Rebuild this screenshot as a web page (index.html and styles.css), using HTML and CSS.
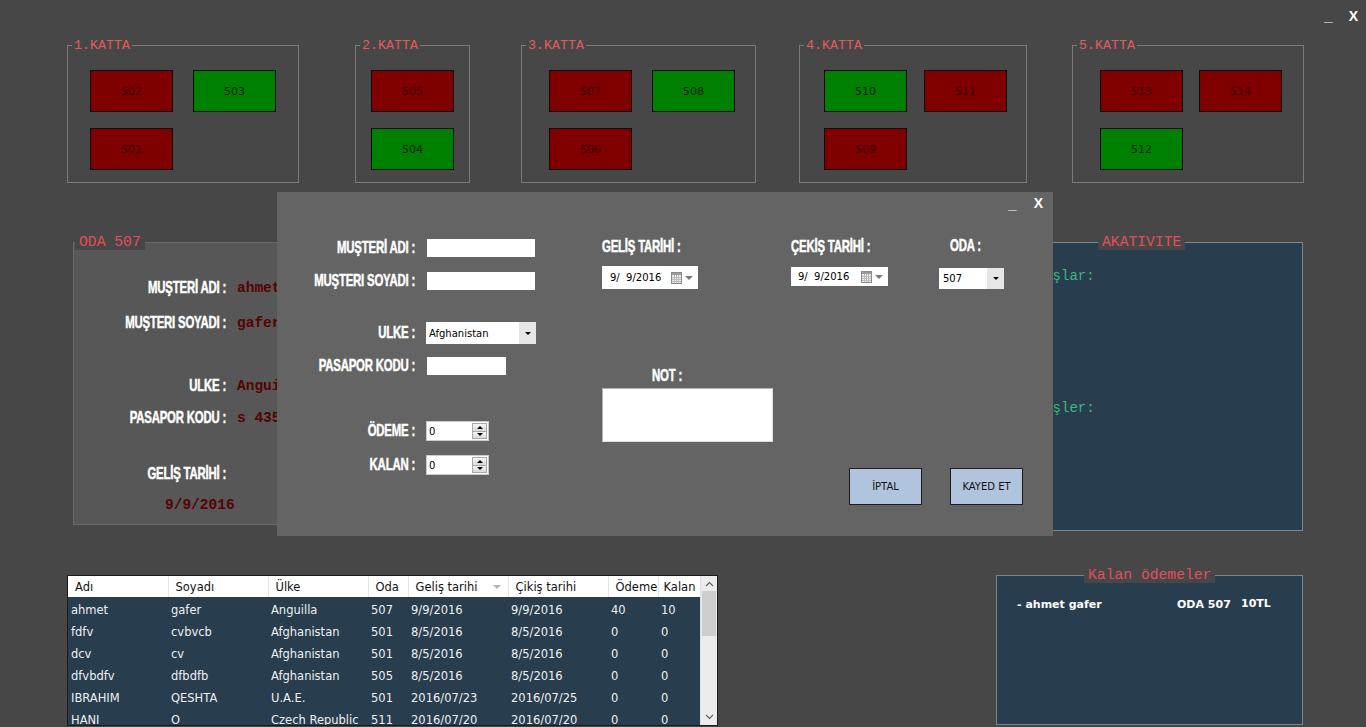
FILE: index.html
```html
<!DOCTYPE html>
<html lang="tr">
<head>
<meta charset="utf-8">
<title>Otel Yönetimi</title>
<link rel="stylesheet" href="styles.css">
</head>
<body>
<div class="app">
  <div class="titlebar"><span class="tb-min">_</span><span class="tb-close">X</span></div>

  <div class="floors">
    <div class="group g1">
      <span class="legend">1.KATTA</span>
      <div class="rooms">
        <div class="room red">502</div><div class="room green">503</div>
        <div class="room red">501</div>
      </div>
    </div>
    <div class="group g2">
      <span class="legend">2.KATTA</span>
      <div class="rooms single">
        <div class="room red">505</div>
        <div class="room green">504</div>
      </div>
    </div>
    <div class="group g3">
      <span class="legend">3.KATTA</span>
      <div class="rooms">
        <div class="room red">507</div><div class="room green">508</div>
        <div class="room red">506</div>
      </div>
    </div>
    <div class="group g4">
      <span class="legend">4.KATTA</span>
      <div class="rooms">
        <div class="room green">510</div><div class="room red">511</div>
        <div class="room red">509</div>
      </div>
    </div>
    <div class="group g5">
      <span class="legend">5.KATTA</span>
      <div class="rooms">
        <div class="room red">513</div><div class="room red">514</div>
        <div class="room green">512</div>
      </div>
    </div>
  </div>

  <div class="middle">
    <section class="oda">
      <span class="legend lg">ODA 507</span>
      <div class="irow r1"><span class="lbl">MUŞTERİ ADI :</span><span class="val">ahmet</span></div>
      <div class="irow r2"><span class="lbl">MUŞTERI SOYADI :</span><span class="val">gafer</span></div>
      <div class="irow r3"><span class="lbl">ULKE :</span><span class="val">Anguilla</span></div>
      <div class="irow r4"><span class="lbl">PASAPOR KODU :</span><span class="val">s 4353</span></div>
      <div class="irow r5"><span class="lbl">GELİŞ TARİHİ :</span></div>
      <div class="dval val">9/9/2016</div>
    </section>
    <section class="act">
      <span class="legend lg act-legend">AKATIVITE</span>
      <div class="gline l1">Girişlar:</div>
      <div class="gline l2">Çıkışler:</div>
    </section>
  </div>

  <div class="bottom">
    <div class="grid">
      <table class="gtable">
        <colgroup>
          <col class="c100"><col class="c100"><col class="c100"><col class="c40">
          <col class="c100"><col class="c100"><col class="c50"><col class="c42">
        </colgroup>
        <thead>
          <tr>
            <th>Adı</th><th>Soyadı</th><th>Ülke</th><th>Oda</th>
            <th><div class="thc">Geliş tarihi<span class="sort"></span></div></th>
            <th>Çikiş tarihi</th><th class="th-od">Ödeme</th><th class="th-ka">Kalan</th>
          </tr>
        </thead>
        <tbody>
          <tr><td>ahmet</td><td>gafer</td><td>Anguilla</td><td>507</td><td>9/9/2016</td><td>9/9/2016</td><td>40</td><td>10</td></tr>
          <tr><td>fdfv</td><td>cvbvcb</td><td>Afghanistan</td><td>501</td><td>8/5/2016</td><td>8/5/2016</td><td>0</td><td>0</td></tr>
          <tr><td>dcv</td><td>cv</td><td>Afghanistan</td><td>501</td><td>8/5/2016</td><td>8/5/2016</td><td>0</td><td>0</td></tr>
          <tr><td>dfvbdfv</td><td>dfbdfb</td><td>Afghanistan</td><td>505</td><td>8/5/2016</td><td>8/5/2016</td><td>0</td><td>0</td></tr>
          <tr><td>IBRAHIM</td><td>QESHTA</td><td>U.A.E.</td><td>501</td><td>2016/07/23</td><td>2016/07/25</td><td>0</td><td>0</td></tr>
          <tr><td>HANI</td><td>O</td><td>Czech Republic</td><td>511</td><td>2016/07/20</td><td>2016/07/20</td><td>0</td><td>0</td></tr>
        </tbody>
      </table>
      <div class="vscroll">
        <div class="sbtn up"><svg width="9" height="6" viewBox="0 0 9 6"><path d="M1 5 L4.5 1.5 L8 5" fill="none" stroke="#606060" stroke-width="1.2"/></svg></div>
        <div class="thumb"></div>
        <div class="track"></div>
        <div class="sbtn down"><svg width="9" height="6" viewBox="0 0 9 6"><path d="M1 1 L4.5 4.5 L8 1" fill="none" stroke="#606060" stroke-width="1.2"/></svg></div>
      </div>
    </div>
    <section class="kalan">
      <span class="legend lg kalan-legend">Kalan ödemeler</span>
      <div class="krow"><span class="kname">- ahmet gafer</span><span class="koda">ODA 507</span><span class="ktl">10TL</span></div>
    </section>
  </div>

  <div class="dialog">
    <div class="d-head"><span class="tb-min">_</span><span class="tb-close">X</span></div>
    <div class="d-body">
      <div class="colA">
        <div class="frow f1"><span class="lbl">MUŞTERİ ADI :</span><div class="tb"></div></div>
        <div class="frow f2"><span class="lbl">MUŞTERI SOYADI :</span><div class="tb"></div></div>
        <div class="frow f3"><span class="lbl">ULKE :</span><div class="sel wide"><span>Afghanistan</span><span class="arr"><i class="tri"></i></span></div></div>
        <div class="frow f4"><span class="lbl">PASAPOR KODU :</span><div class="tb short"></div></div>
        <div class="frow f5"><span class="lbl">ÖDEME :</span><div class="spin"><span>0</span><span class="sbs"><span class="sb"><i class="tri up"></i></span><span class="sb"><i class="tri"></i></span></span></div></div>
        <div class="frow f6"><span class="lbl">KALAN :</span><div class="spin"><span>0</span><span class="sbs"><span class="sb"><i class="tri up"></i></span><span class="sb"><i class="tri"></i></span></span></div></div>
      </div>
      <div class="colB">
        <div class="lbl hl">GELİŞ TARİHİ :</div>
        <div class="dp dp1"><span>9/&nbsp; 9/2016</span>
          <svg class="cal" width="11" height="12" viewBox="0 0 11 12"><rect x="0.5" y="0.5" width="10" height="11" fill="#ececec" stroke="#8c8c8c"/><rect x="1" y="1" width="9" height="2" fill="#9c9c9c"/><path d="M1 5.5h9M1 7.5h9M1 9.5h9M3.5 3v8M5.5 3v8M7.5 3v8" stroke="#bdbdbd" stroke-width="1"/></svg>
          <i class="tri gray"></i>
        </div>
        <div class="lbl nl">NOT :</div>
        <div class="note"></div>
      </div>
      <div class="colCD">
        <div class="cd-top">
          <div class="colC">
            <div class="lbl hl">ÇEKİŞ TARİHİ :</div>
            <div class="dp dp2"><span>9/&nbsp; 9/2016</span>
              <svg class="cal" width="11" height="12" viewBox="0 0 11 12"><rect x="0.5" y="0.5" width="10" height="11" fill="#ececec" stroke="#8c8c8c"/><rect x="1" y="1" width="9" height="2" fill="#9c9c9c"/><path d="M1 5.5h9M1 7.5h9M1 9.5h9M3.5 3v8M5.5 3v8M7.5 3v8" stroke="#bdbdbd" stroke-width="1"/></svg>
              <i class="tri gray"></i>
            </div>
          </div>
          <div class="colD">
            <div class="lbl hl oda-l">ODA :</div>
            <div class="sel oda-sel"><span>507</span><span class="arr"><i class="tri"></i></span></div>
          </div>
        </div>
        <div class="btns">
          <div class="btn">İPTAL</div>
          <div class="btn">KAYED ET</div>
        </div>
      </div>
    </div>
  </div>
</div>
</body>
</html>
```
FILE: styles.css
```css
* { box-sizing: border-box; }
html, body { margin: 0; padding: 0; }
body {
  background: #474747;
  width: 1366px;
  height: 727px;
  overflow: hidden;
  font-family: "DejaVu Sans", sans-serif;
}
.app { position: relative; width: 1366px; height: 727px; }

/* title bar */
.titlebar {
  height: 45px;
  display: flex;
  justify-content: flex-end;
  align-items: flex-start;
  gap: 16px;
  padding: 8px 8px 0 0;
  color: #fff;
  font-family: "Liberation Sans", Arial, sans-serif;
  font-weight: bold;
  font-size: 14px;
  line-height: 16px;
}
.tb-min { font-size: 15px; }

/* floors */
.floors { display: flex; align-items: flex-start; padding-left: 67px; }
.group {
  position: relative;
  height: 138px;
  border: 1px solid #7a7a7a;
  padding-top: 24px;
}
.g1 { width: 232px; padding-left: 22px; }
.g2 { width: 115px; padding-left: 15px; margin-left: 56px; }
.g3 { width: 235px; padding-left: 27px; margin-left: 51px; }
.g4 { width: 228px; padding-left: 24px; margin-left: 43px; }
.g5 { width: 232px; padding-left: 27px; margin-left: 45px; }
.rooms { display: grid; grid-template-columns: 83px 83px; row-gap: 16px; column-gap: 20px; }
.rooms.single { grid-template-columns: 83px; }
.g4 .rooms { column-gap: 17px; }
.g5 .rooms { column-gap: 16px; }
.room {
  height: 42px;
  border: 1px solid #0a0a0a;
  display: flex;
  align-items: center;
  justify-content: center;
  font-size: 11px;
}
.red { background: #800000; color: #380000; }
.green { background: #008000; color: #002400; }

.legend {
  position: absolute;
  top: -8px;
  left: 4px;
  padding: 0 2px;
  background: #474747;
  color: #e25c5c;
  font-family: "Liberation Mono", monospace;
  font-size: 13.3px;
  line-height: 16px;
}
.legend.lg { font-size: 14.7px; padding: 0 4px; left: 1px; top: -9px; line-height: 16px; color: #e0505a; }
.legend.act-legend { left: 101px; }
.legend.kalan-legend { left: 87px; }

/* condensed heavy labels */
.lbl {
  font-family: "Liberation Sans", Arial, sans-serif;
  font-weight: bold;
  font-size: 17px;
  color: #fff;
  letter-spacing: -0.3px;
  white-space: nowrap;
  -webkit-text-stroke: 0.5px #fff;
  transform: scaleX(0.67);
  transform-origin: left center;
}
.irow .lbl, .frow .lbl {
  display: flex;
  justify-content: flex-end;
  flex-shrink: 0;
  transform-origin: right center;
}

/* middle */
.middle {
  margin-top: 59px;
  height: 289px;
  display: flex;
  justify-content: space-between;
  align-items: flex-start;
  padding: 0 63px 0 73px;
}
.oda {
  position: relative;
  width: 450px;
  height: 283px;
  background: #575757;
  border: 1px solid #696969;
  padding-top: 35px;
}
.irow { display: flex; align-items: center; height: 20px; }
.r2 { margin-top: 15px; }
.r3 { margin-top: 43px; }
.r4 { margin-top: 12px; }
.r5 { margin-top: 36px; }
.irow .lbl { width: 152px; margin-right: 11px; }
.val {
  font-family: "Liberation Mono", monospace;
  font-weight: bold;
  font-size: 14.5px;
  color: #560303;
}
.dval { margin-top: 11px; padding-left: 91px; line-height: 20px; }

.act {
  position: relative;
  width: 307px;
  height: 289px;
  background: #283d4e;
  border: 1px solid #7b858e;
  padding: 25px 0 0 22px;
}
.gline {
  font-family: "Liberation Mono", monospace;
  font-size: 14px;
  line-height: 16px;
  color: #3cb87a;
}
.l2 { margin-top: 116px; }

/* bottom */
.bottom {
  margin-top: 44px;
  display: flex;
  justify-content: space-between;
  align-items: flex-start;
  padding: 0 63px 0 67px;
}
.grid {
  width: 651px;
  height: 151px;
  border: 1px solid #1c1c1c;
  display: flex;
  overflow: hidden;
  background: #283d4e;
}
.gtable {
  border-collapse: collapse;
  table-layout: fixed;
  width: 632px;
  font-size: 11.5px;
  align-self: flex-start;
}
.c100 { width: 100px; }
.c40 { width: 40px; }
.c50 { width: 50px; }
.c42 { width: 42px; }
.gtable th {
  height: 21px;
  background: #fff;
  color: #111;
  font-weight: normal;
  text-align: left;
  padding: 0 0 0 7px;
  border-right: 1px solid #e6e6e6;
  white-space: nowrap;
  overflow: hidden;
}
.gtable th.th-od { padding-left: 7px; }
.gtable th.th-ka { padding-left: 5px; border-right: 0; }
.thc { display: flex; align-items: center; justify-content: space-between; padding-right: 7px; }
.sort {
  width: 0; height: 0;
  border-left: 4px solid transparent;
  border-right: 4px solid transparent;
  border-top: 4px solid #b4b4b4;
}
.gtable td {
  height: 22px;
  padding: 5px 0 0 3px;
  line-height: 16px;
  vertical-align: top;
  color: #f0f0f0;
  white-space: nowrap;
  overflow: hidden;
}
.vscroll {
  width: 17px;
  height: 100%;
  background: #ececec;
  display: flex;
  flex-direction: column;
  border-left: 1px solid #dcdcdc;
}
.sbtn { height: 15px; display: flex; align-items: center; justify-content: center; }
.sbtn.down { height: 16px; }
.thumb { height: 45px; margin: 0 1px; background: #cdcdcd; }
.track { flex: 1; }

.kalan {
  position: relative;
  width: 307px;
  height: 150px;
  background: #283d4e;
  border: 1px solid #7b858e;
  padding: 22px 0 0 20px;
}
.krow {
  display: flex;
  font-family: "DejaVu Sans", sans-serif;
  font-weight: bold;
  font-size: 11px;
  line-height: 14px;
  color: #fff;
}
.kname { width: 160px; }
.koda { width: 64px; }
.ktl { margin-top: -1px; }

/* dialog */
.dialog {
  position: absolute;
  left: 277px;
  top: 192px;
  width: 776px;
  height: 344px;
  background: #646464;
}
.d-head {
  height: 26px;
  display: flex;
  justify-content: flex-end;
  align-items: flex-start;
  gap: 17px;
  padding: 3px 10px 0 0;
  color: #fff;
  font-family: "Liberation Sans", Arial, sans-serif;
  font-weight: bold;
  font-size: 14px;
  line-height: 16px;
}
.d-head .tb-min { padding-top: 1px; }
.d-body { display: flex; align-items: flex-start; }
.colA { width: 263px; padding-top: 20px; }
.frow { display: flex; align-items: center; height: 20px; }
.frow .lbl { width: 138px; margin-right: 12px; }
.f2 { margin-top: 13px; }
.f3 { margin-top: 32px; }
.f4 { margin-top: 13px; }
.f5 { margin-top: 45px; }
.f6 { margin-top: 14px; }
.tb { width: 108px; height: 18px; background: #fff; }
.tb.short { width: 79px; }

.sel {
  height: 22px;
  background: #fff;
  display: flex;
  align-items: center;
  font-size: 10px;
  color: #000;
  padding-left: 3px;
}
.sel.wide { width: 110px; margin-left: -1px; }
.sel .arr {
  margin-left: auto;
  width: 17px;
  height: 100%;
  background: #e6e6e6;
  display: flex;
  align-items: center;
  justify-content: center;
}
.tri {
  display: block;
  width: 0; height: 0;
  border-left: 3px solid transparent;
  border-right: 3px solid transparent;
  border-top: 3px solid #000;
}
.tri.up { border-top: 0; border-bottom: 3px solid #000; }
.tri.gray { border-left-width: 4px; border-right-width: 4px; border-top: 4px solid #7a7a7a; margin-left: 3px; }

.spin {
  width: 63px;
  height: 20px;
  margin-left: -1px;
  background: #fff;
  border: 1px solid #cacaca;
  display: flex;
  align-items: center;
  font-size: 10px;
  padding-left: 2px;
}
.sbs {
  margin-left: auto;
  margin-right: 1px;
  width: 15px;
  height: 16px;
  display: flex;
  flex-direction: column;
}
.sb {
  flex: 1;
  background: linear-gradient(#f6f6f6, #dadada);
  border: 1px solid #a9a9a9;
  display: flex;
  align-items: center;
  justify-content: center;
}
.sb + .sb { border-top: 0; }

.colB { width: 171px; margin-left: 62px; }
.hl { margin-top: 21px; line-height: 16px; }
.dp {
  background: #fff;
  display: flex;
  align-items: center;
  font-size: 10px;
  color: #000;
  padding: 0 5px 0 8px;
}
.dp .cal { margin-left: auto; }
.dp1 { width: 96px; height: 23px; margin-top: 11px; }
.dp2 { width: 97px; height: 19px; margin-top: 12px; padding-left: 7px; }
.nl { margin-top: 79px; margin-left: 50px; line-height: 16px; }
.note {
  margin-top: 4px;
  width: 171px;
  height: 54px;
  background: #fff;
  border: 1px solid #b4b4b4;
  border-right-color: #dedede;
  border-bottom-color: #dedede;
}

.colCD { margin-left: 18px; }
.cd-top { display: flex; height: 71px; }
.colC { width: 97px; }
.colD { margin-left: 51px; }
.oda-l { margin-left: 11px; margin-top: 20px; }
.oda-sel { width: 65px; height: 21px; margin-top: 14px; padding-left: 4px; }
.btns { display: flex; gap: 28px; margin-left: 58px; margin-top: 179px; }
.btn {
  width: 73px;
  height: 37px;
  background: #b0c4de;
  border: 1px solid #1e1e1e;
  display: flex;
  align-items: center;
  justify-content: center;
  font-size: 10px;
  color: #111;
}
```
